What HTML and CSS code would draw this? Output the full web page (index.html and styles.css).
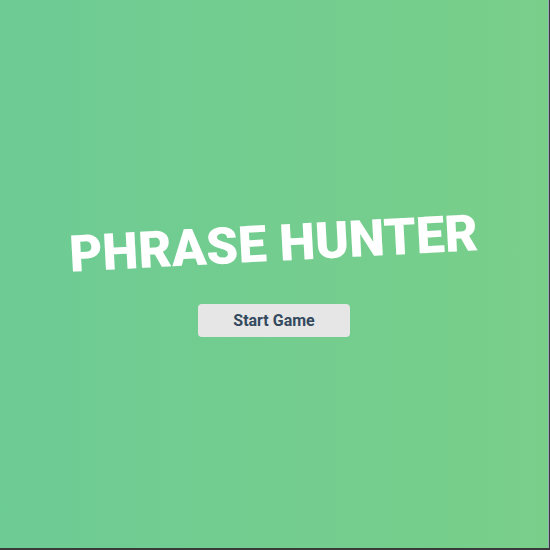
FILE: index.html
```html
<!DOCTYPE html>
<html lang="en">
<head>
  <meta charset="UTF-8" />
  <title>Phrase Hunter</title>
  <link rel="stylesheet" href="styles.css">
</head>
<body>
  <div id="overlay" class="start">
    <h2 class="title">Phrase Hunter</h2>
    <button id="btn__reset">Start Game</button>
  </div>
</body>
</html>
```

FILE: styles.css
```css
html, body {
  margin: 0;
  height: 100%;
}
body {
  font-family: Roboto, "DejaVu Sans", sans-serif;
  background: #3a3a3a;
}
#overlay {
  box-sizing: border-box;
  height: 548px;
  width: 549px;
  border-right: 1px solid #9ab;
  background: linear-gradient(to right, #6dcb94, #79cf8a);
  display: flex;
  flex-direction: column;
  align-items: center;
  padding-top: 214px;
}
.title {
  margin: 0;
  color: #fff;
  font-size: 51px;
  font-weight: 900;
  text-transform: uppercase;
  transform: rotate(-3deg);
}
#btn__reset {
  margin-top: 31px;
  width: 152px;
  height: 33px;
  border: none;
  border-radius: 4px;
  background: #e6e6e6;
  color: #34495e;
  font-family: Roboto, "DejaVu Sans", sans-serif;
  font-weight: bold;
  font-size: 16px;
}
```
